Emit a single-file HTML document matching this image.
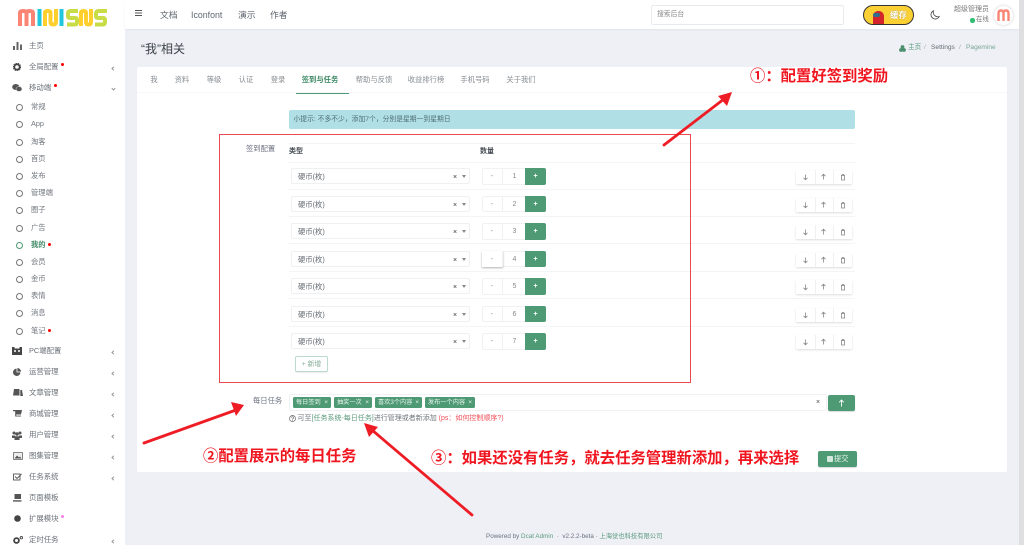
<!DOCTYPE html>
<html lang="zh-CN"><head><meta charset="utf-8"><title>MiniSNS</title>
<style>
*{box-sizing:border-box}
html,body{margin:0;padding:0;width:1024px;height:545px;overflow:hidden;background:#eef0f6;font-family:"Liberation Sans","Noto Sans CJK SC",sans-serif;color:#6b7280}
#w{position:absolute;left:0;top:0;width:1024px;height:545px;overflow:hidden;filter:blur(.3px)}
.a{position:absolute;white-space:nowrap}
.side{position:absolute;left:0;top:0;width:125px;height:545px;background:#fff;overflow:hidden}
.top{position:absolute;left:125px;top:0;width:894px;height:29px;background:#fff;box-shadow:0 1px 2px rgba(0,0,0,.05)}
.sb{position:absolute;left:1019px;top:0;width:5px;height:545px;background:#dfdfe2}
.m{position:absolute;left:29px;font-size:7.4px;line-height:12px;color:#6b7078;height:12px;white-space:nowrap}
.s{position:absolute;left:31px;font-size:7.3px;line-height:12px;color:#71767d;height:12px;white-space:nowrap}
.c{position:absolute;left:16px;width:7px;height:7px;border:1px solid #777;border-radius:50%}
.ic{position:absolute;left:12px}
.ch{position:absolute;left:112px;width:3px;height:3px;border-left:.7px solid #999;border-bottom:.7px solid #999;transform:rotate(45deg)}
.rd{position:absolute;width:3.4px;height:3.4px;border-radius:50%;background:#f00}
.card{position:absolute;left:137px;top:67px;width:870px;height:405px;background:#fff;border-radius:2px}
.tab{position:absolute;top:74px;font-size:7.3px;line-height:11px;color:#888d92;transform:translateX(-50%);white-space:nowrap}
.line{position:absolute;left:289px;width:566px;height:1px;background:#f3f4f6}
.sel{position:absolute;left:291px;width:179px;height:16px;border:1px solid #eef0f2;border-radius:2px;font-size:7.3px;line-height:16px;padding-left:6px;color:#666c73;background:#fff}
.sel b{position:absolute;left:161px;top:1px;font-weight:400;color:#333;font-size:7px}
.sel i{position:absolute;left:170px;top:6px;border:2px solid transparent;border-top:3px solid #888}
.num{position:absolute;left:482px;width:64px;height:16.5px;border:1px solid #f0f1f3;border-radius:2px;background:#fff;font-size:7px;color:#888}
.num u{position:absolute;left:-1px;top:-1px;width:20.5px;height:16.5px;text-align:center;text-decoration:none;border-right:1px solid #f0f1f3;line-height:17px}
.num s{position:absolute;left:20px;top:-1px;width:23px;text-align:center;text-decoration:none;line-height:17px}
.num em{position:absolute;left:42px;top:-1px;width:21px;height:16.5px;background:#4e9a75;color:#fff;text-align:center;font-style:normal;line-height:17px;font-weight:700;border-radius:0 2px 2px 0}
.ops{position:absolute;left:796px;width:56px;height:14px;background:#fff;box-shadow:0 1px 2px rgba(0,0,0,.14);border-radius:1px}
.ops span{position:absolute;top:0;width:1px;height:14px;background:#f0f0f0}
.ops svg{position:absolute;left:0;top:0}
.tag{position:absolute;top:397px;height:10.5px;background:#4e9a75;color:#e9f4ee;font-size:6.2px;line-height:11px;border-radius:1.5px;padding-left:3px;white-space:nowrap}
.tag b{position:absolute;right:3px;top:0;font-weight:400;font-size:6.5px}
.ann{position:absolute;color:#f01620;font-weight:700;font-size:15.35px;line-height:20px;white-space:nowrap}
</style></head><body><div id="w">

<div class="side">
<svg class="a" style="left:0;top:0" width="125" height="32" viewBox="0 0 125 32" fill="none" stroke-width="4">
<path d="M20 26V13Q20 11 23.200 11T26.500 13V26M26.500 13Q26.500 11 29.700 11T33 13V26" stroke="#fb8574"/>
<path d="M39.500 26V9" stroke="#20c6dc"/>
<path d="M45 26V13Q45 11 47.800 11T50.500 13V22Q50.500 24.500 53.200 24.500T56 22V9" stroke="#ffd02d"/>
<path d="M61.500 26V9" stroke="#20c6dc"/>
<path d="M78 11H70.500Q68 11 68 14V16Q68 18 70.500 18H75Q77 18 77 20V22Q77 24.500 74.500 24.500H67" stroke="#c9dc45"/>
<path d="M81 26V13Q81 11 83.500 11T86 13V22Q86 24.500 88.500 24.500T91 22V9" stroke="#ffd02d"/>
<path d="M107 11H98.500Q96 11 96 14V16Q96 18 98.500 18H103Q105 18 105 20V22Q105 24.500 102.500 24.500H95" stroke="#c9dc45"/>
</svg>

<svg class="ic" style="top:42px;left:13px" width="9" height="8" viewBox="0 0 9 8"><path d="M0 4h2v4H0zM3.500 0h2v8h-2zM7 2.500h2V8H7z" fill="#666"/></svg>
<div class="m" style="top:40px">主页</div>
<svg class="ic" style="top:63px;left:13px" width="8" height="8" viewBox="0 0 8 8"><circle cx="4" cy="4" r="2.700" fill="none" stroke="#444" stroke-width="1.800"/><circle cx="4" cy="4" r="3.900" fill="none" stroke="#444" stroke-width=".8" stroke-dasharray="1.300 1.100"/></svg>
<div class="m" style="top:61px">全局配置</div><div class="rd" style="left:61px;top:63px"></div><div class="ch" style="top:67px"></div>
<svg class="ic" style="top:84px" width="10" height="8" viewBox="0 0 10 8"><ellipse cx="3.800" cy="3" rx="3.600" ry="3" fill="#555"/><ellipse cx="7" cy="5" rx="3" ry="2.500" fill="#555" stroke="#fff" stroke-width=".4"/></svg>
<div class="m" style="top:82px">移动端</div><div class="rd" style="left:54px;top:84px"></div><div class="ch" style="top:87px;transform:rotate(-45deg)"></div>

<div class="c" style="top:104px"></div><div class="s" style="top:101px">常规</div>
<div class="c" style="top:121px"></div><div class="s" style="top:118px">App</div>
<div class="c" style="top:139px"></div><div class="s" style="top:136px">淘客</div>
<div class="c" style="top:156px"></div><div class="s" style="top:153px">首页</div>
<div class="c" style="top:173px"></div><div class="s" style="top:170px">发布</div>
<div class="c" style="top:190px"></div><div class="s" style="top:187px">管理端</div>
<div class="c" style="top:207px"></div><div class="s" style="top:204px">圈子</div>
<div class="c" style="top:225px"></div><div class="s" style="top:222px">广告</div>
<div class="c" style="top:242px;border-color:#4e9a75"></div><div class="s" style="top:239px;color:#3f8a66;font-weight:700">我的</div><div class="rd" style="left:48px;top:243px"></div>
<div class="c" style="top:259px"></div><div class="s" style="top:256px">会员</div>
<div class="c" style="top:276px"></div><div class="s" style="top:273px">金币</div>
<div class="c" style="top:293px"></div><div class="s" style="top:290px">表情</div>
<div class="c" style="top:310px"></div><div class="s" style="top:307px">消息</div>
<div class="c" style="top:328px"></div><div class="s" style="top:325px">笔记</div><div class="rd" style="left:48px;top:329px"></div>

<svg class="ic" style="top:347px" width="10" height="8" viewBox="0 0 10 8"><path d="M0 0h2.500v1.500h5V0H10v8H0z" fill="#444"/><circle cx="3" cy="4" r="1" fill="#fff"/><circle cx="7" cy="4" r="1" fill="#fff"/></svg>
<div class="m" style="top:345px">PC端配置</div><div class="ch" style="top:351px"></div>
<svg class="ic" style="top:368px;left:13px" width="8" height="8" viewBox="0 0 8 8"><path d="M4.400 0A3.700 3.700 0 0 1 8 3.600H4.400zM3.600 .6V4.400H7.400A3.700 3.700 0 1 1 3.600 .6z" fill="#555"/></svg>
<div class="m" style="top:366px">运营管理</div><div class="ch" style="top:372px"></div>
<svg class="ic" style="top:389px;left:12.500px" width="10" height="8" viewBox="0 0 10 8"><path d="M1 0H6.500V6.500H0zM7.300 1H9L10 7H7.300z" fill="#555"/></svg>
<div class="m" style="top:387px">文章管理</div><div class="ch" style="top:393px"></div>
<svg class="ic" style="top:410px;left:13px" width="9" height="8" viewBox="0 0 9 8"><path d="M0 0h9L8 4.500H3.200V5.600H8V6.500H2.200V1.200H0z" fill="#555"/></svg>
<div class="m" style="top:408px">商城管理</div><div class="ch" style="top:414px"></div>
<svg class="ic" style="top:431px" width="10" height="9" viewBox="0 0 10 9" fill="#555"><circle cx="2" cy="2" r="1.500"/><circle cx="8" cy="2" r="1.500"/><circle cx="5" cy="3" r="1.800"/><path d="M0 4.500h3v2.500H0zM7 4.500h3v2.500H7zM2.500 5.200h5V9h-5z"/></svg>
<div class="m" style="top:429px">用户管理</div><div class="ch" style="top:435px"></div>
<svg class="ic" style="top:452px;left:12.500px" width="10" height="8" viewBox="0 0 10 8"><rect x=".4" y=".4" width="9.200" height="7.200" rx="1" fill="#eee" stroke="#666" stroke-width=".8"/><path d="M1.500 6.500L4 3.500 6 5.500 7 4.500 8.500 6.500z" fill="#555"/></svg>
<div class="m" style="top:450px">图集管理</div><div class="ch" style="top:456px"></div>
<svg class="ic" style="top:473px;left:13px" width="9" height="8" viewBox="0 0 9 8" fill="none" stroke="#555" stroke-width=".9"><rect x=".5" y="1" width="6.500" height="6"/><path d="M2 3.500l2 2L8.500 1"/></svg>
<div class="m" style="top:471px">任务系统</div><div class="ch" style="top:477px"></div>
<svg class="ic" style="top:494px;left:13px" width="9" height="8" viewBox="0 0 9 8"><path d="M1.500 0H8V5H1.500zM0 6.300H8.500V7.600H0z" fill="#555"/></svg>
<div class="m" style="top:492px">页面模板</div>
<svg class="ic" style="top:515px;left:14px" width="7" height="7" viewBox="0 0 7 7"><circle cx="3.500" cy="3.500" r="3.300" fill="#444"/></svg>
<div class="m" style="top:513px">扩展模块</div><div class="rd" style="left:61px;top:515px;background:#f47ee8"></div>
<svg class="ic" style="top:536px;left:13px" width="10" height="8" viewBox="0 0 10 8"><circle cx="3.500" cy="4.500" r="2.400" fill="none" stroke="#444" stroke-width="1.800"/><circle cx="8.300" cy="1.700" r="1.200" fill="none" stroke="#444" stroke-width=".9"/></svg>
<div class="m" style="top:534px">定时任务</div><div class="ch" style="top:540px"></div>
</div>

<div class="top"></div>
<svg class="a" style="left:135px;top:10px" width="7" height="6" viewBox="0 0 7 6"><path d="M0 .5h7M0 3h7M0 5.500h7" stroke="#555" stroke-width="1"/></svg>
<div class="a" style="left:160px;top:9px;font-size:8.800px;line-height:12px;color:#5f6670">文档</div>
<div class="a" style="left:191px;top:9px;font-size:8.800px;line-height:12px;color:#5f6670">Iconfont</div>
<div class="a" style="left:238px;top:9px;font-size:8.800px;line-height:12px;color:#5f6670">演示</div>
<div class="a" style="left:270px;top:9px;font-size:8.800px;line-height:12px;color:#5f6670">作者</div>

<div class="a" style="left:651px;top:5px;width:193px;height:20px;border:1px solid #e8eaed;border-radius:2px;font-size:6.800px;line-height:18px;padding-left:5px;color:#888">搜索后台</div>

<div class="a" style="left:863px;top:5px;width:51px;height:20px;background:#fbd034;border:1.300px solid #333;border-radius:10px;overflow:hidden">
<div class="a" style="left:9px;top:5px;width:11px;height:14px;background:#d3232b;border-radius:5px 5px 0 0"></div>
<div class="a" style="left:9px;top:7px;width:7px;height:3.500px;background:#2f6f8f;border-radius:2px"></div>
<div class="a" style="left:26px;top:3px;font-size:8.400px;line-height:12px;font-weight:700;color:#fff;text-shadow:0 0 1px #9a8a4a">缓存</div>
</div>

<svg class="a" style="left:930px;top:10px" width="10" height="10" viewBox="0 0 10 10" fill="none"><path d="M3.500 .8A4.300 4.300 0 1 0 9.200 6.500 4.500 4.500 0 0 1 3.500 .8z" stroke="#555" stroke-width=".9"/></svg>
<div class="a" style="left:954px;top:5px;font-size:7px;line-height:10px;color:#777">超级管理员</div>
<div class="a" style="left:970px;top:18px;width:4.500px;height:4.500px;border-radius:50%;background:#2fbf71"></div>
<div class="a" style="left:976px;top:15px;font-size:6.400px;line-height:10px;color:#777">在线</div>
<div class="a" style="left:994px;top:6px;width:19px;height:19px;border-radius:50%;background:#fff;box-shadow:0 0 3px rgba(0,0,0,.2)"></div>
<svg class="a" style="left:997px;top:9px" width="13" height="13" viewBox="0 0 13 13" fill="none"><path d="M1.500 12V4.500Q1.500 1.500 4 1.500T6.500 4.500V12M6.500 4.500Q6.500 1.500 9 1.500T11.500 4.500V12" stroke="#fb8574" stroke-width="2.400"/></svg>

<div class="a" style="left:141px;top:41px;font-size:12px;line-height:17px;color:#3c4248">“我”相关</div>
<svg class="a" style="left:899px;top:45px" width="7" height="7" viewBox="0 0 7 7"><circle cx="2" cy="5" r="1.900" fill="#4e8f70"/><circle cx="5" cy="5" r="1.900" fill="#4e8f70"/><circle cx="3.500" cy="2" r="1.900" fill="#4e8f70"/></svg>
<div class="a" style="left:908px;top:43px;font-size:6.600px;line-height:10px;color:#5b9a7c">主页</div>
<div class="a" style="left:924px;top:43px;font-size:6.600px;line-height:10px;color:#aaa">/</div>
<div class="a" style="left:931px;top:43px;font-size:6.600px;line-height:10px;color:#666c73">Settings</div>
<div class="a" style="left:959px;top:43px;font-size:6.600px;line-height:10px;color:#aaa">/</div>
<div class="a" style="left:966px;top:43px;font-size:6.600px;line-height:10px;color:#79a893">Pagemine</div>

<div class="card"></div>
<div class="a" style="left:137px;top:92px;width:870px;height:1px;background:#f6f7f8"></div>
<div class="tab" style="left:154px">我</div><div class="tab" style="left:182px">资料</div><div class="tab" style="left:214px">等级</div><div class="tab" style="left:246px">认证</div><div class="tab" style="left:278px">登录</div>
<div class="tab" style="left:320px;color:#3f8a66;font-weight:700">签到与任务</div>
<div class="tab" style="left:374px">帮助与反馈</div><div class="tab" style="left:426px">收益排行榜</div><div class="tab" style="left:475px">手机号码</div><div class="tab" style="left:521px">关于我们</div>
<div class="a" style="left:296px;top:92.500px;width:53px;height:1px;background:#4e9a75"></div>

<div class="a" style="left:289px;top:110px;width:566px;height:19px;background:#b0dfe5;border-radius:2px;font-size:6.800px;line-height:19px;padding-left:4.500px;color:#4f6f75">小提示: 不多不少，添加7个，分别是星期一到星期日</div>

<div class="a" style="left:246px;top:143px;font-size:7.300px;line-height:11px;color:#6b7280">签到配置</div>
<div class="a" style="left:289px;top:146px;font-size:7px;line-height:11px;font-weight:700;color:#444b52">类型</div>
<div class="a" style="left:480px;top:146px;font-size:7px;line-height:11px;font-weight:700;color:#444b52">数量</div>

<div class="line" style="top:143px"></div><div class="line" style="top:162px"></div><div class="line" style="top:189px"></div><div class="line" style="top:216px"></div><div class="line" style="top:243px"></div><div class="line" style="top:271px"></div><div class="line" style="top:298px"></div><div class="line" style="top:326px"></div>

<div class="sel" style="top:168px">硬币(枚)<b>×</b><i></i></div>
<div class="num" style="top:168px"><u>-</u><s>1</s><em>+</em></div>
<div class="ops" style="top:170px"><span style="left:19px"></span><span style="left:37px"></span><svg width="56" height="14" fill="none" stroke="#888" stroke-width=".8"><path d="M9.500 4.500v5M7.500 7.800l2 2 2-2M27.500 9.500v-5M25.500 6.200l2-2 2 2M45 5.500h4M45.500 5.500v4.500h3V5.500M46.200 5.500v-1h1.600v1"/></svg></div>
<div class="sel" style="top:195.500px">硬币(枚)<b>×</b><i></i></div>
<div class="num" style="top:195.500px"><u>-</u><s>2</s><em>+</em></div>
<div class="ops" style="top:197.500px"><span style="left:19px"></span><span style="left:37px"></span><svg width="56" height="14" fill="none" stroke="#888" stroke-width=".8"><path d="M9.500 4.500v5M7.500 7.800l2 2 2-2M27.500 9.500v-5M25.500 6.200l2-2 2 2M45 5.500h4M45.500 5.500v4.500h3V5.500M46.200 5.500v-1h1.600v1"/></svg></div>
<div class="sel" style="top:223px">硬币(枚)<b>×</b><i></i></div>
<div class="num" style="top:223px"><u>-</u><s>3</s><em>+</em></div>
<div class="ops" style="top:225px"><span style="left:19px"></span><span style="left:37px"></span><svg width="56" height="14" fill="none" stroke="#888" stroke-width=".8"><path d="M9.500 4.500v5M7.500 7.800l2 2 2-2M27.500 9.500v-5M25.500 6.200l2-2 2 2M45 5.500h4M45.500 5.500v4.500h3V5.500M46.200 5.500v-1h1.600v1"/></svg></div>
<div class="sel" style="top:250.500px">硬币(枚)<b>×</b><i></i></div>
<div class="num" style="top:250.500px"><u style="box-shadow:0 1px 2px rgba(0,0,0,.3);background:#fff">-</u><s>4</s><em>+</em></div>
<div class="ops" style="top:252.500px"><span style="left:19px"></span><span style="left:37px"></span><svg width="56" height="14" fill="none" stroke="#888" stroke-width=".8"><path d="M9.500 4.500v5M7.500 7.800l2 2 2-2M27.500 9.500v-5M25.500 6.200l2-2 2 2M45 5.500h4M45.500 5.500v4.500h3V5.500M46.200 5.500v-1h1.600v1"/></svg></div>
<div class="sel" style="top:278px">硬币(枚)<b>×</b><i></i></div>
<div class="num" style="top:278px"><u>-</u><s>5</s><em>+</em></div>
<div class="ops" style="top:280px"><span style="left:19px"></span><span style="left:37px"></span><svg width="56" height="14" fill="none" stroke="#888" stroke-width=".8"><path d="M9.500 4.500v5M7.500 7.800l2 2 2-2M27.500 9.500v-5M25.500 6.200l2-2 2 2M45 5.500h4M45.500 5.500v4.500h3V5.500M46.200 5.500v-1h1.600v1"/></svg></div>
<div class="sel" style="top:305.500px">硬币(枚)<b>×</b><i></i></div>
<div class="num" style="top:305.500px"><u>-</u><s>6</s><em>+</em></div>
<div class="ops" style="top:307.500px"><span style="left:19px"></span><span style="left:37px"></span><svg width="56" height="14" fill="none" stroke="#888" stroke-width=".8"><path d="M9.500 4.500v5M7.500 7.800l2 2 2-2M27.500 9.500v-5M25.500 6.200l2-2 2 2M45 5.500h4M45.500 5.500v4.500h3V5.500M46.200 5.500v-1h1.600v1"/></svg></div>
<div class="sel" style="top:333px">硬币(枚)<b>×</b><i></i></div>
<div class="num" style="top:333px"><u>-</u><s>7</s><em>+</em></div>
<div class="ops" style="top:335px"><span style="left:19px"></span><span style="left:37px"></span><svg width="56" height="14" fill="none" stroke="#888" stroke-width=".8"><path d="M9.500 4.500v5M7.500 7.800l2 2 2-2M27.500 9.500v-5M25.500 6.200l2-2 2 2M45 5.500h4M45.500 5.500v4.500h3V5.500M46.200 5.500v-1h1.600v1"/></svg></div>

<div class="a" style="left:295px;top:356px;width:33px;height:16px;border:1px solid #bcd9cb;border-radius:2px;font-size:6.800px;line-height:15px;text-align:center;color:#7fa894;box-shadow:0 1px 1px rgba(0,0,0,.08);background:#fff">+ 新增</div>

<div class="a" style="left:219px;top:134px;width:472px;height:249px;border:1px solid #ec4a52"></div>

<div class="a" style="left:253px;top:395px;font-size:7.300px;line-height:12px;color:#6b7280">每日任务</div>
<div class="a" style="left:289px;top:394px;width:538px;height:17px;border:1px solid #f0f1f3;border-radius:2px;background:#fff"></div>
<div class="tag" style="left:293px;width:38px">每日签到<b>×</b></div>
<div class="tag" style="left:334px;width:38px">抽奖一次<b>×</b></div>
<div class="tag" style="left:375px;width:47px">喜欢3个内容<b>×</b></div>
<div class="tag" style="left:425px;width:50px">发布一个内容<b>×</b></div>
<div class="a" style="left:816px;top:397px;font-size:7px;line-height:11px;color:#444">×</div>
<div class="a" style="left:828px;top:395px;width:27px;height:16px;background:#4e9a75;border-radius:2px;box-shadow:0 1px 1px rgba(0,0,0,.15)"><svg class="a" style="left:10px;top:4px" width="7" height="8" fill="none" stroke="#fff" stroke-width=".9"><path d="M3.500 7.500V1M1.200 3.300L3.500 1l2.300 2.300"/></svg></div>

<svg class="a" style="left:289px;top:415px" width="7" height="7" fill="none" stroke="#666" stroke-width=".7"><circle cx="3.500" cy="3.500" r="3"/><path d="M2.300 2.700Q2.500 1.700 3.500 1.700T4.700 2.700Q4.600 3.400 3.500 3.900V4.600M3.500 5.100v.6"/></svg>
<div class="a" style="left:297.500px;top:413px;font-size:7px;line-height:12px;color:#70767d">可至<span style="color:#5c9a7d">[任务系统-每日任务]</span>进行管理或者新添加<span style="color:#f0525a"> (ps：如何控制顺序?)</span></div>

<div class="a" style="left:818px;top:451px;width:39px;height:16px;background:#4e9a75;border-radius:2px;box-shadow:0 1px 1px rgba(0,0,0,.15);font-size:7.300px;line-height:16px;color:#e9f4ee;padding-left:16px">提交<i class="a" style="left:9px;top:5px;width:6px;height:6px;background:#d5e8de;border-radius:1px"></i></div>

<div class="a" style="left:486px;top:532px;font-size:6.300px;line-height:10px;color:#6b7280">Powered by <span style="color:#5c9a7d">Dcat Admin</span> &nbsp;·&nbsp; v2.2.2-beta · <span style="color:#5c9a7d">上海觉也科技有限公司</span></div>

<div class="sb"></div>

<svg class="a" style="left:0;top:0" width="1024" height="545" fill="none">
<g stroke="#ee1c25" stroke-width="2.800" stroke-linecap="round">
<path d="M664 145L724 99"/><path d="M144 443L236 410"/><path d="M472 515L372 430"/>
</g>
<g fill="#ee1c25">
<path d="M732 92L718 96 727 106 Z"/>
<path d="M244 405L231 402 236 416 Z"/>
<path d="M364 423L369 437 378 427 Z"/>
</g>
</svg>

<div class="ann" style="left:750px;top:67px">①：配置好签到奖励</div>
<div class="ann" style="left:203px;top:447px">②配置展示的每日任务</div>
<div class="ann" style="left:431px;top:449px">③：如果还没有任务，就去任务管理新添加，再来选择</div>
</div></body></html>
